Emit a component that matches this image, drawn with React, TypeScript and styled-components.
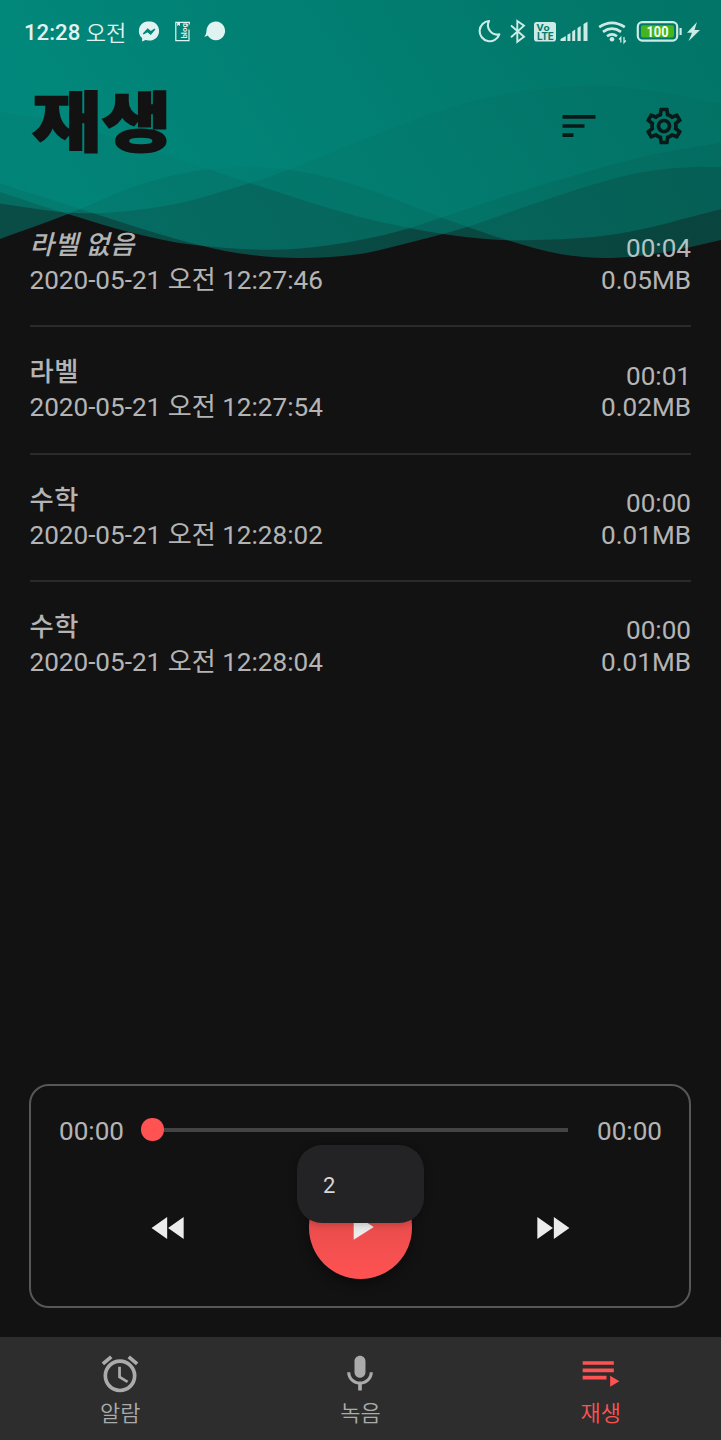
import React from "react";
import styled, { createGlobalStyle } from "styled-components";
import { MdSort, MdOutlineSettings, MdAccessAlarm, MdMic, MdFastForward, MdFastRewind, MdPlayArrow } from "react-icons/md";

const GlobalStyle = createGlobalStyle`
  * { box-sizing: border-box; }
  body { margin: 0; background: #121212; }
`;

const Screen = styled.div`
  position: relative;
  width: 721px;
  height: 1440px;
  overflow: hidden;
  display: flex;
  flex-direction: column;
  background: #121212;
  color: rgba(255, 255, 255, 0.7);
  font-family: Roboto, "Noto Sans CJK KR", sans-serif;
`;

const WaveArt = styled.svg`
  position: absolute;
  top: 0;
  left: 0;
`;

const StatusBar = styled.div`
  position: relative;
  height: 64px;
  padding: 0 20px 0 24px;
  display: flex;
  align-items: center;
  justify-content: space-between;
  color: #e0f3f0;
`;

const Clock = styled.div`
  width: 204px;
  display: flex;
  align-items: center;
  font-size: 22.2px;
  font-weight: 500;
  line-height: 30px;
  white-space: pre;
`;

const Meridiem = styled.span`
  font-family: "Noto Sans CJK KR", sans-serif;
  font-weight: 350;
  font-size: 22px;
  line-height: 28px;
  padding-bottom: 3px;
`;

const NoticeIcons = styled.svg`
  flex: none;
  margin-left: 9.5px;
`;

const Header = styled.header`
  position: relative;
  height: 136px;
  padding: 0 35px 0 31.5px;
  display: flex;
  justify-content: space-between;
  color: #121212;
`;

const Title = styled.h1`
  margin: 0;
  padding-top: 6px;
  height: 110px;
  font-family: "Noto Sans CJK KR", sans-serif;
  font-size: 75px;
  line-height: 96px;
  font-weight: 900;
  transform: scale(1.01, 0.865);
  transform-origin: 0 57px;
  -webkit-text-stroke: 1.8px #121212;
`;

const Actions = styled.div`
  display: flex;
  gap: 41px;
  padding-top: 40px;
  color: #071a18;
`;

const List = styled.ul`
  position: relative;
  flex: 1;
  margin: 0;
  padding: 0 30px 0 29.5px;
  list-style: none;
`;

const Row = styled.li`
  height: 127.4px;
  padding-top: 25px;
  display: flex;
  justify-content: space-between;
  border-bottom: 2px solid #2a2a2a;
  font-size: 26.1px;
  &:last-child { border-bottom: 0; }
`;

const Info = styled.div`
  display: flex;
  flex-direction: column;
`;

const Label = styled.div<{ $unset?: boolean }>`
  font-family: "Noto Sans CJK KR", sans-serif;
  font-size: 26.3px;
  font-weight: 500;
  line-height: 36px;
  letter-spacing: 0.5px;
  font-style: ${(p) => (p.$unset ? "italic" : "normal")};
`;

const DateLine = styled.div`
  padding-top: 1px;
  line-height: 37px;
  white-space: nowrap;
`;

const Meta = styled.div`
  padding-top: 8.3px;
  text-align: right;
  line-height: 31.7px;
`;

const Player = styled.section`
  position: relative;
  height: 224px;
  margin: 0 30px 29px 29px;
  padding: 28px 27px 0 28px;
  border: 2px solid #575757;
  border-radius: 20px;
`;

const Seek = styled.div`
  height: 34px;
  display: flex;
  align-items: center;
  justify-content: space-between;
  font-size: 26.1px;
`;

const Track = styled.div`
  flex: 1;
  height: 23px;
  margin: 0 29px 3px 17.5px;
  display: flex;
  align-items: center;
`;

const Thumb = styled.span`
  flex: none;
  width: 22.6px;
  height: 22.6px;
  border-radius: 50%;
  background: #ff5252;
`;

const Rail = styled.span`
  flex: 1;
  height: 4px;
  background: #444;
`;

const Controls = styled.div`
  height: 104px;
  margin: 28px 88px 0 88.4px;
  display: flex;
  align-items: center;
  justify-content: space-between;
  color: #ececec;
`;

const PlayButton = styled.div`
  width: 103.5px;
  height: 103.5px;
  margin-bottom: 2.5px;
  border-radius: 50%;
  display: grid;
  place-items: center;
  background: linear-gradient(#d94848, #ff5252);
  box-shadow: 0 5px 12px rgba(0, 0, 0, 0.4);
`;

const Toast = styled.div`
  position: absolute;
  left: 297px;
  top: 1145px;
  width: 127px;
  height: 78px;
  padding: 2px 0 0 26px;
  display: flex;
  align-items: center;
  border-radius: 25px;
  background: #232325;
  box-shadow: 0 1px 8px rgba(0, 0, 0, 0.25);
  color: #d6d6d6;
  font-size: 22px;
`;

const Nav = styled.nav`
  height: 103px;
  display: flex;
  background: #2d2d2d;
`;

const Tab = styled.div<{ $active?: boolean }>`
  flex: 1;
  padding-top: 15px;
  display: flex;
  flex-direction: column;
  align-items: center;
  color: ${(p) => (p.$active ? "#ff5252" : "#ababab")};
  font-family: "Noto Sans CJK KR", sans-serif;
  font-weight: 350;
  font-size: 22px;
  line-height: 30px;
`;

type Pt = [number, number];

const waves: Pt[][] = [
  [[0, 203.5], [67, 212.5], [117, 212], [180, 203], [250, 183], [290, 169], [360, 141], [430, 114], [500, 95], [590, 85.5], [660, 92], [721, 103.5]],
  [[0, 239], [68, 214], [133, 187], [190, 172], [247, 167.3], [300, 171.5], [360, 186.5], [443, 218], [507, 240], [560, 254], [610, 258], [660, 253], [721, 240]],
  [[0, 192], [68, 214], [133, 233], [187, 244], [255, 249.5], [300, 248.5], [360, 240], [410, 228], [493, 200], [593, 170], [660, 153], [721, 143]],
  [[0, 183.5], [68, 205], [133, 226], [187, 242], [240, 253.5], [300, 258], [360, 254], [400, 245], [467, 227], [527, 206], [593, 184.5], [643, 172], [693, 167], [721, 167]],
  [[0, 112], [67, 123.5], [167, 155], [250, 183], [360, 217], [443, 234], [493, 239.5], [527, 240.3], [593, 237], [643, 229], [721, 209]],
];

// Closes a smooth curve through the points against the top edge.
const wavePath = (pts: Pt[]) => {
  let d = `M0 0L${pts[0][0]} ${pts[0][1]}`;
  for (let i = 0; i < pts.length - 1; i++) {
    const a = pts[Math.max(0, i - 1)];
    const b = pts[i];
    const c = pts[i + 1];
    const e = pts[Math.min(pts.length - 1, i + 2)];
    const h = (c[0] - b[0]) / 3;
    const m1 = (c[1] - a[1]) / (c[0] - a[0]);
    const m2 = (e[1] - b[1]) / (e[0] - b[0]);
    d += `C${b[0] + h} ${b[1] + m1 * h} ${c[0] - h} ${c[1] - m2 * h} ${c[0]} ${c[1]}`;
  }
  return d + "V0Z";
};

const records = [
  { label: "라벨 없음", unset: true, date: "2020-05-21 오전 12:27:46", time: "00:04", size: "0.05MB" },
  { label: "라벨", date: "2020-05-21 오전 12:27:54", time: "00:01", size: "0.02MB" },
  { label: "수학", date: "2020-05-21 오전 12:28:02", time: "00:00", size: "0.01MB" },
  { label: "수학", date: "2020-05-21 오전 12:28:04", time: "00:00", size: "0.01MB" },
];

const Waves = () => (
  <WaveArt width="721" height="262" viewBox="0 0 721 262">
    <defs>
      <linearGradient id="teal" gradientUnits="userSpaceOnUse" x1="100" y1="220" x2="620" y2="-110">
        <stop offset="0" stopColor="#008d80" />
        <stop offset="1" stopColor="#00796b" />
      </linearGradient>
    </defs>
    {waves.map((w, i) => (
      <path key={i} d={wavePath(w)} fill="url(#teal)" fillOpacity="0.48" />
    ))}
  </WaveArt>
);

const Notices = () => (
  <NoticeIcons width="92" height="28" viewBox="136 18 92 28" fill="#e0f3f0">
    <path d="M149 21.2c-5.8 0-10.1 4.2-10.1 9.7 0 3 1.2 5.4 3.2 7.1v3.6l3.4-1.5c1.1.3 2.3.5 3.500.5 5.800 0 10.100-4.200 10.100-9.700s-4.300-9.700-10.100-9.700z" />
    <path d="M143.300 34l4.400-4.800 3 2.500 4.200-2.600-4.300 4.900-3-2.500z" fill="#04877a" stroke="#04877a" strokeWidth="1.300" />
    <path d="M189 29.500V40.700H175.800V22.300H189.300V24.500" fill="none" stroke="#e0f3f0" strokeWidth="1.200" />
    <path d="M177.200 22v4l1.400-1 1.400 1v-4z" />
    <text transform="translate(187.200 38.600) rotate(-90)" fontFamily="Roboto" fontWeight="700" fontSize="8" textLength="15.500" lengthAdjust="spacingAndGlyphs">blog</text>
    <path d="M215.800 21.600a9.300 9.300 0 1 1-8 14c-.9.700-2.200 1.100-3.700.9 1.800-1.200 2.100-2.500 2.400-6 .5-5 4.200-8.900 9.300-8.900z" />
  </NoticeIcons>
);

const SystemIcons = () => (
  <svg width="226" height="30" viewBox="475 17 226 30" fill="none" stroke="#cdebe5">
    <path d="M489 21a10.100 10.100 0 1 0 10.300 13.300 9.300 9.300 0 0 1-10.300-13.300z" strokeWidth="2.100" strokeLinejoin="round" />
    <path d="M511 25.500l13 11.300-6.700 5V21l6.700 4.700-13 11.500" strokeWidth="1.900" />
    <rect x="534" y="22" width="22" height="19.500" rx="2.800" fill="#cdebe5" stroke="none" />
    <text x="536.600" y="31" fontFamily="Roboto" fontWeight="700" fontSize="9.800" fill="#057b70" stroke="none" textLength="13" lengthAdjust="spacingAndGlyphs">Vo</text>
    <text x="537" y="39.800" fontFamily="Roboto" fontWeight="700" fontSize="10" fill="#057b70" stroke="none" textLength="16.500" lengthAdjust="spacingAndGlyphs">LTE</text>
    <g fill="#cdebe5" stroke="none">
      <path d="M560.500 41v-2l5.300-3v5z" />
      <path d="M567.400 34.800l3-1.800V41h-3zM572.200 31.500l3-2v11.500h-3zM577.500 28l3.200-2v15h-3.200zM583.500 24l4-2.200V41h-4z" />
      <circle cx="612" cy="39.300" r="2.300" />
    </g>
    <path d="M599.200 27.200q12.800-8.800 25.600 0M603 31.800q9-6.300 18 0M607 36.300q5-4 10 0" strokeWidth="2.700" />
    <path d="M620.800 42.500v-5l-1.800 2M624 37v5.500l1.800-2" strokeWidth="1.300" />
    <rect x="637.800" y="22.200" width="39.400" height="18.400" rx="4.500" strokeWidth="2.200" />
    <rect x="641" y="25.300" width="33" height="12.200" rx="1.800" fill="#43b51f" stroke="none" />
    <path d="M680.600 28v7" strokeWidth="2.200" />
    <text x="646.500" y="36.500" fontFamily="Roboto" fontWeight="700" fontSize="14" fill="#f4fff4" stroke="none" textLength="22" lengthAdjust="spacingAndGlyphs">100</text>
    <path d="M697 22l-10 10.800h5l-3.500 8.500 11.500-11.200h-5.500z" fill="#cdebe5" stroke="none" />
  </svg>
);

export default function App() {
  return (
    <Screen>
      <GlobalStyle />
      <Waves />
      <StatusBar>
        <Clock>
          12:28 <Meridiem>오전</Meridiem>
          <Notices />
        </Clock>
        <SystemIcons />
      </StatusBar>
      <Header>
        <Title>재생</Title>
        <Actions>
          <MdSort size={44} />
          <MdOutlineSettings size={44} />
        </Actions>
      </Header>
      <List>
        {records.map((r) => (
          <Row key={r.date}>
            <Info>
              <Label $unset={r.unset}>{r.label}</Label>
              <DateLine>{r.date}</DateLine>
            </Info>
            <Meta>
              <div>{r.time}</div>
              <div>{r.size}</div>
            </Meta>
          </Row>
        ))}
      </List>
      <Player>
        <Seek>
          <span>00:00</span>
          <Track>
            <Thumb />
            <Rail />
          </Track>
          <span>00:00</span>
        </Seek>
        <Controls>
          <MdFastRewind size={44} />
          <PlayButton>
            <MdPlayArrow size={44} />
          </PlayButton>
          <MdFastForward size={44} />
        </Controls>
      </Player>
      <Nav>
        <Tab>
          <MdAccessAlarm size={44} />
          알람
        </Tab>
        <Tab>
          <MdMic size={44} />
          녹음
        </Tab>
        <Tab $active>
          <svg width="44" height="44" viewBox="0 0 24 24" fill="currentColor">
            <path d="M19 9H2v2h17V9zm0-4H2v2h17V5zM2 15h13v-2H2v2zm15-2v6l5-3-5-3z" />
          </svg>
          재생
        </Tab>
      </Nav>
      <Toast>2</Toast>
    </Screen>
  );
}
